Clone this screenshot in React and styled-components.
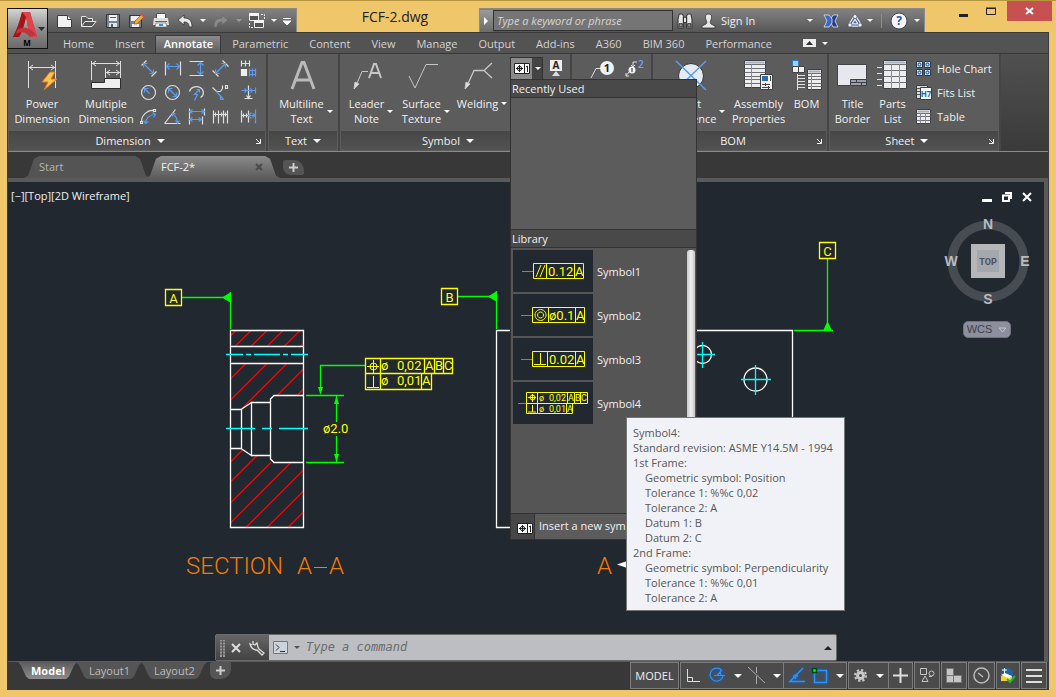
import React from 'react';
import styled, { createGlobalStyle, css } from 'styled-components';

const GlobalStyle = createGlobalStyle`
  * {
    box-sizing: border-box;
  }
  body {
    margin: 0;
    background: #efc669;
    color: #f0f0f0;
    font-family: 'Open Sans', 'Noto Sans', sans-serif;
    font-size: 11px;
    line-height: 15px;
  }
  button,
  input {
    margin: 0;
    padding: 0;
    border: none;
    background: none;
    color: inherit;
    font: inherit;
  }
  svg {
    display: block;
    flex: none;
  }
`;

const Window = styled.div`
  display: flex;
  flex-direction: column;
  min-height: 100vh;
  padding: 0 8px 7px 8px;
  border-top: 1px solid #b8953f;
  background: #efc669;
`;

/* ---------- title bar ---------- */

const TitleBar = styled.header`
  display: flex;
  align-items: flex-start;
  height: 31px;
  margin: 0 -1px;
`;

const AppButton = styled.button`
  position: relative;
  z-index: 2;
  width: 41px;
  height: 41px;
  margin-top: 7px;
  border: 1px solid #111;
  background: linear-gradient(#d4d4d4, #8a8a8a 55%, #6a6a6a);
  flex: none;
`;

const Bar = styled.div`
  display: flex;
  align-items: center;
  height: 24px;
  margin-top: 7px;
  border: 1px solid #8c8a84;
  border-bottom: none;
  background: linear-gradient(#828282, #565656);
`;

const QuickAccess = styled(Bar)`
  width: 249px;
  padding-left: 5px;
  border-left: none;
  flex: none;
`;

const IconButton = styled.button`
  display: flex;
  align-items: center;
  justify-content: center;
  width: ${p => p.$w || 24}px;
  height: ${p => p.$h || 22}px;
  flex: none;
`;

const FileName = styled.h1`
  flex: 1;
  margin: 0;
  padding: 6px 0 0 14px;
  color: #222;
  font-size: 14px;
  font-weight: 400;
  line-height: 20px;
  text-align: center;
`;

const InfoCenter = styled(Bar)`
  flex: none;
`;

const ExpandButton = styled(IconButton)`
  background: linear-gradient(#9a9a9a, #6b6b6b);
`;

const SearchInput = styled.input`
  width: 180px;
  height: 21px;
  padding-left: 3px;
  border: 1px solid #333;
  background: #757575;
  font-style: italic;
  &::placeholder {
    color: #d6d6d6;
    opacity: 1;
  }
`;

const SignIn = styled.button`
  display: flex;
  align-items: center;
  gap: 5px;
  width: 106px;
  height: 22px;
  padding-left: 4px;
`;

const Divider = styled.span`
  width: 1px;
  height: 14px;
  margin: 0 6px;
  background: #8d8d8d;
`;

const WindowControls = styled.div`
  display: flex;
  width: 124px;
  padding-left: 20px;
  color: #1d1d1d;
`;

const CloseButton = styled(IconButton)`
  width: 45px;
  height: 20px;
  margin-left: 7px;
  background: #c75050;
`;

const Caret = styled.span`
  width: 0;
  height: 0;
  border: ${p => p.$s || 3}px solid transparent;
  border-top-color: ${p => p.$c || '#fff'};
  border-bottom: none;
  flex: none;
`;

/* ---------- ribbon ---------- */

const Frame = styled.div`
  display: flex;
  flex: 1;
  flex-direction: column;
  border: 1px solid #3a3a3a;
  margin: 0 -1px;
  background: #383838;
`;

const RibbonTabs = styled.nav`
  display: flex;
  align-items: flex-end;
  height: 20px;
  padding-left: 44px;
  background: #535353;
`;

const RibbonTab = styled.button`
  height: 18px;
  padding: 0 9px 4px 10px;
  border: 1px solid transparent;
  border-bottom: none;
  border-radius: 1px 1px 0 0;
  color: #d2d2d2;
  ${p =>
    p.$active &&
    css`
      padding: 0 7px 4px 8px;
      border-color: #3a3a3a;
      background: linear-gradient(#8b8b8b, #5e5e5e);
      color: #fff;
      font-weight: 600;
    `}
`;

const RibbonToggle = styled.button`
  display: flex;
  align-items: center;
  gap: 5px;
  height: 18px;
  margin-left: 20px;
  padding-bottom: 2px;
`;

const Ribbon = styled.div`
  display: flex;
  height: 99px;
  border-top: 1px solid #383838;
  border-bottom: 1px solid #8a8a8a;
  background: linear-gradient(#505050, #3a3a3a);
`;

const Panel = styled.section`
  display: flex;
  flex-direction: column;
  border-right: 2px solid #454545;
  background: #5c5c5c;
  flex: none;
`;

const PanelBody = styled.div`
  display: flex;
  flex: 1;
  padding: 0 1px;
`;

const PanelTitle = styled.div`
  display: flex;
  align-items: center;
  height: 19px;
  margin: 0 1px 1px;
  background: linear-gradient(#474747, #525252);
`;

const PanelName = styled.button`
  display: flex;
  flex: 1;
  align-items: center;
  justify-content: center;
  gap: 6px;
`;

const BigButton = styled.button`
  display: flex;
  flex-direction: column;
  align-items: center;
  width: ${p => p.$w}px;
  padding-top: 6px;
`;

const BigLabel = styled.span`
  display: flex;
  align-items: center;
  gap: 3px;
  margin-top: 5px;
  padding-left: ${p => (p.$menu ? 6 : 0)}px;
  white-space: pre;
`;

const ToolGrid = styled.div`
  display: grid;
  grid-template-columns: repeat(4, 24px) 32px;
  grid-auto-rows: 24px;
  padding-top: 3px;
`;

const SmallTools = styled.div`
  display: flex;
  align-items: flex-start;
  padding: ${p => p.$pad || '3px 0 0'};
`;

const SplitButton = styled.div`
  position: relative;
  display: flex;
  height: 23px;
  border: 1px solid #333;
  background: linear-gradient(90deg, #8a8a8a 21px, #444 21px);
`;

const SheetList = styled.div`
  display: flex;
  flex-direction: column;
  padding: 3px 6px 0 5px;
`;

const ListButton = styled.button`
  display: flex;
  align-items: center;
  gap: 5px;
  height: 24px;
  padding-bottom: 1px;
`;

/* ---------- symbol menu ---------- */

const Menu = styled.div`
  position: absolute;
  z-index: 5;
  top: 21px;
  left: -1px;
  width: 187px;
  border: 1px solid #333;
  background: #5c5c5c;
`;

const MenuHeader = styled.h2`
  height: 18px;
  margin: 0;
  padding: 1px 1px;
  border-bottom: 1px solid #333;
  background: #494949;
  font-size: 11px;
  font-weight: 400;
`;

const RecentArea = styled.div`
  height: 132px;
  border-bottom: 1px solid #333;
`;

const Library = styled.div`
  display: flex;
  height: 265px;
  padding: 2px 1px 0 2px;
  background: #555;
`;

const SymbolList = styled.ul`
  display: flex;
  flex: 1;
  flex-direction: column;
  gap: 2px;
  margin: 0;
  padding: 0;
  list-style: none;
`;

const SymbolItem = styled.li`
  position: relative;
`;

const SymbolButton = styled.button`
  display: flex;
  align-items: center;
  gap: 4px;
  width: 100%;
  svg {
    background: #212830;
  }
`;

const ScrollThumb = styled.div`
  width: 8px;
  border-radius: 3px;
  background: linear-gradient(90deg, #c9c9c9, #efefef 50%, #c4c4c4);
`;

const InsertButton = styled.button`
  display: flex;
  width: 100%;
  height: 26px;
  border-top: 1px solid #333;
  line-height: 24px;
`;

const InsertIcon = styled.span`
  display: flex;
  align-items: center;
  justify-content: center;
  width: 24px;
  height: 25px;
  padding: 3px 0 0 4px;
  border-right: 1px solid #333;
  background: #474747;
`;

const InsertText = styled.span`
  padding-left: 4px;
`;

const Tooltip = styled.div`
  position: absolute;
  z-index: 6;
  top: 35px;
  left: 113px;
  min-width: 219px;
  padding: 7px 5px 5px 6px;
  border: 1px solid #767676;
  background: #f1f2f7;
  color: #575757;
  white-space: nowrap;
`;

const TipLine = styled.div`
  padding-left: ${p => (p.$indent ? 12 : 0)}px;
`;

/* ---------- file tabs ---------- */

const FileTabs = styled.nav`
  display: flex;
  align-items: flex-end;
  height: 26px;
  padding: 0 0 0 16px;
  background: #383838;
`;

const FileTab = styled.button`
  display: flex;
  align-items: center;
  justify-content: space-between;
  width: ${p => (p.$active ? 134 : 126)}px;
  height: 22px;
  padding: 0 17px 1px 15px;
  margin-left: ${p => (p.$active ? -4 : 0)}px;
  background: ${p =>
    p.$active ? 'linear-gradient(#8a8a8a, #5c5c5c)' : '#545454'};
  color: ${p => (p.$active ? '#f2f2f2' : '#b4b4b4')};
  clip-path: polygon(
    0 100%,
    4px 90%,
    10px 12%,
    15px 0,
    calc(100% - 15px) 0,
    calc(100% - 10px) 12%,
    calc(100% - 4px) 90%,
    100% 100%
  );
`;

const NewTab = styled.button`
  display: flex;
  align-items: center;
  justify-content: center;
  width: 21px;
  height: ${p => (p.$low ? 17 : 15)}px;
  margin: ${p => (p.$low ? '0 0 0 4px' : '0 0 3px 3px')};
  border-radius: ${p => (p.$low ? '3px 1px 10px 6px' : '2px 10px 2px 8px')};
  background: #555;
`;

/* ---------- drawing area ---------- */

const Canvas = styled.main`
  position: relative;
  display: flex;
  flex: 1;
  min-height: 480px;
  border: solid #5a5a5a;
  border-width: 4px 4px 0 0;
  background: #212830;
`;

const Drawing = styled.svg`
  flex: 1;
  min-width: 0;
  font-family: Roboto, sans-serif;
`;

const ViewLabel = styled.button`
  position: absolute;
  top: 6px;
  left: 3px;
`;

const ViewControls = styled.div`
  position: absolute;
  top: 7px;
  right: 7px;
  display: flex;
`;

const ViewCube = styled.div`
  position: absolute;
  top: 34px;
  right: 13px;
  display: flex;
  flex-direction: column;
  align-items: center;
  gap: 12px;
  font-family: 'Liberation Sans', Arial, sans-serif;
`;

const Wcs = styled.button`
  display: flex;
  align-items: center;
  gap: 6px;
  height: 17px;
  padding: 0 3px;
  border: 1px solid #70727e;
  border-radius: 5px;
  background: #8d8f9c;
  color: #3f424c;
`;

const CommandLine = styled.div`
  position: absolute;
  bottom: 0;
  left: 207px;
  display: flex;
  width: 60%;
  height: 27px;
  border: 1px solid #6a6a6a;
  border-radius: 2px;
  background: #bdbec1;
`;

const CommandTools = styled.div`
  display: flex;
  align-items: center;
  width: 53px;
  padding-left: 4px;
  background: linear-gradient(#666, #424242);
`;

const CommandInput = styled.input`
  flex: 1;
  min-width: 0;
  padding-left: 4px;
  font-family: 'DejaVu Sans Mono', monospace;
  font-size: 12px;
  font-style: italic;
  &::placeholder {
    color: #696b6e;
    opacity: 1;
  }
`;

/* ---------- bottom bar ---------- */

const BottomBar = styled.footer`
  display: flex;
  justify-content: space-between;
  height: 28px;
  padding-left: 10px;
  border-top: 1px solid #5a5a5a;
  background: #383838;
`;

const LayoutTabs = styled.nav`
  display: flex;
`;

const LayoutTab = styled.button`
  height: 17px;
  margin-right: -1px;
  padding: 0 12px 1px 13px;
  background: ${p =>
    p.$active ? 'linear-gradient(#5c5c5c, #8c8c8c)' : '#555'};
  color: ${p => (p.$active ? '#fff' : '#bcbcbc')};
  font-weight: ${p => (p.$active ? 700 : 400)};
  clip-path: polygon(
    0 0,
    100% 0,
    calc(100% - 3px) 20%,
    calc(100% - 8px) 85%,
    calc(100% - 11px) 100%,
    11px 100%,
    8px 85%,
    3px 20%
  );
`;

const StatusBar = styled.div`
  display: flex;
  gap: 1px;
  padding-right: 1px;
`;

const StatusGroup = styled.div`
  display: flex;
  align-items: center;
  height: 27px;
  border: 1px solid #7c7c7c;
  background: #4b4b4b;
`;

const StatusButton = styled.button`
  display: flex;
  align-items: center;
  justify-content: center;
  gap: ${p => p.$gap || 8}px;
  min-width: ${p => p.$w || 24}px;
  height: 25px;
  border-left: ${p => (p.$split ? '1px solid #7c7c7c' : 'none')};
  svg {
    ${p => p.$on && 'filter: drop-shadow(0 0 2px #0a66d8);'}
  }
`;

/* ---------- icons ---------- */

const G = '#dedede';
const B = '#5b9bf2';

// 16px dimension tools: grey strokes, then blue strokes
const dimTools = [
  { name: 'Aligned', g: 'M1 5L6 0M11 16L16 11', b: 'M3 3L13 13M3 7V3H7M13 9V13H9' },
  { name: 'Linear', g: 'M1 1V15M16 1V15', b: 'M2 6H15M5 3L2 6L5 9M12 3L15 6L12 9' },
  { name: 'Vertical', g: 'M1 1H15M1 15H15', b: 'M12 2V14M9 5L12 2L15 5M9 11L12 14L15 11' },
  { name: 'Rotated', g: 'M10 0L16 6M0 10L6 16', b: 'M3 13L13 3M9 3H13V7M3 9V13H7' },
  { name: 'Automatic', g: 'M1 0V6M5 0V6M9 0V6M1 3H9', b: 'M9 8V16M12 8V16M15 8V16M9 10H15M9 14H15', sq: true },
  { name: 'Radius', g: 'M15 8A7 7 0 1 1 1 8A7 7 0 1 1 15 8', b: 'M9 9L4 4M4 8V4H8' },
  { name: 'Diameter', g: 'M15 8A7 7 0 1 1 1 8A7 7 0 1 1 15 8', b: 'M4 4L12 12M4 8V4H8M12 8V12H8' },
  { name: 'Jogged', g: 'M1 7A7 6 0 1 1 12 13', b: 'M6 16L9 10L6 10L11 5M8 5H11V8' },
  { name: 'Chamfer', g: 'M0 3L4 7H8L10 4M10 1V4M13 1H15V4H13Z', b: 'M4 7L11 15M8 12V15H11' },
  { name: 'Symmetric', g: 'M8 1V14M4 14H12M6 11L8 14L10 11', b: 'M1 6H15M4 4L6 6L4 8M10 4L12 6L10 8M15 3V9' },
  { name: 'Arc length', g: 'M1 13C1 7 7 1 13 2M13 1H15V3H13ZM0 13H2V15H0Z', b: 'M5 15C5 10 9 6 15 6M12 4L15 6L13 9M3 12L5 15L8 13' },
  { name: 'Angular', g: 'M0 15H16M0 15L11 1', b: 'M8 5C11 7 13 11 13 15M8 8V5H11M11 12L13 15L15 12' },
  { name: 'Baseline', g: 'M1 0V16M14 8V16M16 0V7', b: 'M1 3H16M1 11H13M4 1L1 3L4 5M13 1L16 3L13 5M4 9L1 11L4 13M10 9L13 11L10 13' },
  { name: 'Chain', g: 'M1 2V15M6 2V15M11 2V15M15 2V15M1 6H15M3 4V8M9 4V8M13 4V8', b: '' },
  { name: 'Insert', g: 'M1 2V14M8 2V14M1 7H8M3 5V9M6 5V9', b: 'M15 1V15M8 7H15M11 4L8 7L11 10M12 5L15 7L12 9' }
];

function Stroke({ d, c = G, w = 16, h = 16, sw = 1, fill = 'none', children }) {
  return (
    <svg width={w} height={h} viewBox={`0 0 ${w} ${h}`} fill={fill} stroke={c} strokeWidth={sw}>
      <path d={d} />
      {children}
    </svg>
  );
}

function DimIcon({ tool }) {
  return (
    <svg width="18" height="18" viewBox="-.5 -.5 18 18" fill="none" strokeWidth="1.2">
      <path d={tool.g} stroke={G} />
      <path d={tool.b} stroke={B} />
      {tool.sq && <path d="M1 9H6V15H1Z" fill="#eee" stroke="#eee" />}
    </svg>
  );
}

const Logo = () => (
  <svg width="39" height="39" viewBox="0 0 39 39">
    <path d="M5 28C9 20 12 12 14 3H22L29 28H22L18 8C16 17 14 23 11 28Z" fill="#c8262c" />
    <path d="M14 3H22L29 28H22L18 8Z" fill="#e0434a" />
    <path d="M5 28C9 20 12 12 14 3L18 8C16 17 14 23 11 28Z" fill="#a3151b" />
    <path d="M9 21C15 17 22 18 28 26L22 28C18 23 13 22 8 25Z" fill="#c3343a" />
    <path d="M30 18H37L33.500 22Z" fill="#2c2c2c" />
    <text x="19" y="37" fill="#000" fontSize="8" fontWeight="700" textAnchor="middle">M</text>
  </svg>
);

const NewIcon = () => (
  <Stroke d="M1.500 2.500H11.500L15.500 6.500V14.500H1.500Z" c="#3c3c3c" w={17} fill="#f2f2f2">
    <path d="M11.500 2.500V6.500H15.500" />
  </Stroke>
);
const OpenIcon = () => (
  <Stroke d="M1.500 13V3.500H6L8 5.500H12.500V8M1.500 13.500L5 8.500H16L12 13.500Z" c="#e4e4e4" w={17} fill="#555" />
);
const SaveIcon = () => (
  <svg width="14" height="16" viewBox="0 0 14 16">
    <path d="M.5 1.500H13.500V14.500H.5Z" fill="#7a838c" stroke="#30363c" />
    <path d="M3 2H11V8H3Z" fill="#f2f2f2" />
    <path d="M3 10H11V14H3Z" fill="#dfe3e6" />
    <path d="M5 11H7V14H5ZM4 4H10V5H4Z" fill="#58616b" />
  </svg>
);
const SaveAsIcon = () => (
  <svg width="16" height="16" viewBox="0 0 16 16">
    <path d="M.5 2.500H12.500V14.500H.5Z" fill="#7a838c" stroke="#30363c" />
    <path d="M2 3H11V8H2ZM3 11H10V14H3Z" fill="#eee" />
    <path d="M5 11L6 8L13 1L15 4L8 11Z" fill="#f3a83b" stroke="#7d4c12" strokeWidth=".6" />
    <path d="M12 2L15 5L16 3L13 0Z" fill="#d54b39" />
  </svg>
);
const PrintIcon = () => (
  <svg width="16" height="16" viewBox="0 0 16 16">
    <path d="M3.500 .5H12.500V6H3.500Z" fill="#fff" stroke="#555" />
    <path d="M1 5H15L16 12H0Z" fill="#dedede" />
    <path d="M2 8H14V9H2Z" fill="#666" />
    <path d="M3 10H13L14 14H2Z" fill="#f7f7f7" stroke="#555" strokeWidth=".6" />
    <path d="M6 11H10V13H6Z" fill="#3c8ad8" />
  </svg>
);
const UndoIcon = ({ off }) => (
  <svg width="16" height="14" viewBox="0 0 16 14">
    <path
      transform={off ? 'matrix(-1 0 0 1 16 0)' : undefined}
      d="M1 6L7 1V4C12 4 15 6 15 13H12C12 9 10 8 7 8V11Z"
      fill={off ? '#8a8a8a' : '#e8e8e8'}
      stroke={off ? '#6a6a6a' : '#333'}
      strokeWidth=".8"
    />
  </svg>
);
const WorkspaceIcon = () => (
  <svg width="18" height="16" viewBox="0 0 18 16">
    <path d="M1.500 .5H10.500V7.500H1.500ZM6.500 7.500H15.500V14.500H6.500Z" fill="#555" stroke="#e8e8e8" />
    <path d="M1 0H11V3H1ZM6 7H16V10H6Z" fill="#f4f4f4" />
    <path d="M13 1.500H16.500V6M1.500 10V14.500H5" fill="none" stroke="#e8e8e8" strokeDasharray="2 1" />
  </svg>
);
const BinocularsIcon = () => (
  <svg width="16" height="16" viewBox="0 0 15 15" fill="#e6e6e6" stroke="#222" strokeWidth=".8">
    <path d="M2 1H5L6 3V14H1V6ZM10 1H13L14 6V14H9V3ZM6 4H9V9H6Z" />
    <path d="M2 10H5V13H2ZM10 10H13V13H10Z" fill="#8d9296" />
  </svg>
);
const UserIcon = () => (
  <svg width="15" height="16" viewBox="0 0 15 16" fill="#e8e8e8" stroke="#333" strokeWidth=".8">
    <path d="M7.500 1C11 1 11 4 10 7C9 9 9 10 10 11L14 13V15H1V13L5 11C6 10 6 9 5 7C4 4 4 1 7.500 1Z" />
  </svg>
);
const ExchangeIcon = () => (
  <svg width="16" height="14" viewBox="0 0 16 14" stroke="#dfe5f2" strokeWidth=".8">
    <path d="M15 1H10L7 7L10 13H15L12 7Z" fill="#2a3f8c" />
    <path d="M1 1H6L9 5V9L6 13H1L4 7Z" fill="#3e66c8" />
  </svg>
);
const A360Icon = () => (
  <svg width="16" height="16" viewBox="0 0 16 16" fill="none">
    <path d="M8 4L13 12H3Z" stroke="#e4e8f0" strokeWidth="3.500" strokeLinejoin="round" />
    <path d="M8 4L13 12H3Z" stroke="#4568b8" strokeWidth="1.200" />
    <g fill="#f2f4f8" stroke="#3d4a66" strokeWidth=".6">
      <circle cx="8" cy="3.500" r="2" />
      <circle cx="3" cy="12" r="2" />
      <circle cx="13" cy="12" r="2" />
    </g>
  </svg>
);
const HelpIcon = () => (
  <svg width="18" height="18" viewBox="0 0 18 18">
    <circle cx="9" cy="9" r="8" fill="#f4f6fa" stroke="#444" />
    <text x="9" y="13" fill="#1f58b8" fontSize="12" fontWeight="700" textAnchor="middle">?</text>
  </svg>
);

const PowerIcon = () => (
  <svg width="32" height="31" viewBox="0 0 32 31">
    <path d="M2.500 1V28M29.500 1V28M3 7.500H29M7 5L3.500 7.500L7 10M25 5L28.500 7.500L25 10" fill="none" stroke={G} />
    <path d="M24 12L16 22H22L18 30L31 19H25L29 12Z" fill="#ffc64d" stroke="#e0761a" />
  </svg>
);
const MultipleIcon = () => (
  <svg width="32" height="31" viewBox="0 0 32 31">
    <path d="M1.500 1V20M30.500 1V18M2 3.500H30M15.500 8V18M16 12.500H30M6 1L2.500 3.500L6 6M26 1L29.500 3.500L26 6M20 10L16.500 12.500L20 15M26 10L29.500 12.500L26 15" fill="none" stroke={G} />
    <path d="M1.500 22.500H14.500V18.500H30.500V28.500H1.500Z" fill="#eee" stroke="#2c2c2c" />
  </svg>
);
const BigAIcon = () => (
  <svg width="30" height="31" viewBox="0 0 30 31">
    <path d="M4 29L14 2.500H16L26 29M8 20H22" fill="none" stroke="#b9b9b9" strokeWidth="3" />
  </svg>
);
const LeaderIcon = () => (
  <svg width="30" height="31" viewBox="0 0 30 31" fill="none" stroke="#c6c6c6">
    <path d="M2 28L9 11.500H15" />
    <path d="M1 29L2 22L6 24Z" fill="#ddd" />
    <path d="M16 18L21 4H23L28 18M18 13H26" strokeWidth="2" />
  </svg>
);
const WeldIcon = () => (
  <svg width="30" height="31" viewBox="0 0 30 31" fill="none" stroke="#c6c6c6">
    <path d="M2 28L10 10.500H20L28 3M20 10.500L28 18" strokeWidth="1.300" />
    <path d="M1 29L2 22L6 24Z" fill="#ddd" />
  </svg>
);
const FcfIcon = () => (
  <svg width="16" height="11" viewBox="0 0 16 11">
    <path d="M.5 .5H15.500V10.500H.5Z" fill="#fff" stroke="#222" />
    <path d="M10.500 1V10M2 5.500H9M5.500 2V9M12 4L13.500 3V9" fill="none" stroke="#222" />
    <circle cx="5.500" cy="5.500" r="2.200" fill="none" stroke="#222" />
  </svg>
);
const DatumIcon = () => (
  <svg width="14" height="18" viewBox="0 0 14 18">
    <path d="M1 1H13V12H1Z" fill="#eee" />
    <text x="7" y="10" fill="#222" fontSize="10" fontWeight="700" textAnchor="middle">A</text>
    <path d="M7 12L11 17H3Z" fill="#ddd" />
  </svg>
);
const BalloonIcon = () => (
  <svg width="26" height="22" viewBox="0 0 26 22">
    <path d="M2 20L7 10.500H12" fill="none" stroke={G} />
    <circle cx="18" cy="10" r="7" fill="#f2f2f2" />
    <text x="18" y="14" fill="#222" fontSize="11" fontWeight="700" textAnchor="middle">1</text>
  </svg>
);
const RenumberIcon = () => (
  <svg width="20" height="20" viewBox="0 0 20 20">
    <circle cx="7" cy="11" r="3.500" fill="#f2f2f2" />
    <path d="M7 9V13" stroke="#222" />
    <path d="M4 13L1 17M1 14V17H4M8 8V3H12M6 6L8 8L10 6" fill="none" stroke={G} />
    <text x="13" y="9" fill="#6aa8ff" fontSize="10" fontWeight="600">2</text>
  </svg>
);
const PartRefIcon = () => (
  <svg width="34" height="31" viewBox="0 0 34 31">
    <circle cx="16" cy="16" r="12.500" fill="#e3ebf5" stroke="#333" />
    <path d="M1 1L31 30M31 1L1 30" stroke={B} strokeWidth="1.500" />
  </svg>
);

function Sheet({ x, y, w, h, rows, cols = [] }) {
  const lines = Array.from({ length: rows }, (_, i) => y + 4 + Math.round((i * (h - 4)) / rows));
  return (
    <g transform="translate(.5 .5)">
      <path d={`M${x} ${y}h${w}v${h}h${-w}Z`} fill="#ededed" stroke="#3c4146" />
      <path d={`M${x + 1} ${y + 2}h${w - 2}`} stroke="#aab1bb" strokeWidth="2" />
      {lines.map(l => (
        <path key={l} d={`M${x} ${l}h${w}`} stroke="#6c7076" />
      ))}
      {cols.map(c => (
        <path key={c} d={`M${c} ${y + 4}v${h - 4}`} stroke="#8a8e94" />
      ))}
    </g>
  );
}

const AssemblyIcon = () => (
  <svg width="31" height="31" viewBox="0 0 31 31">
    <Sheet x={1} y={0} w={21} h={27} rows={6} cols={[8]} />
    <path d="M17.500 14.500H29.500V29.500H17.500Z" fill="#f2f2f2" stroke="#3c4146" />
    <path d="M19 16H25V21H19Z" fill="#2d6bb0" />
    <path d="M19 24.500H27M19 27.500H27M22.500 23V26M25.500 26V29M27.500 16V21" stroke="#444" />
  </svg>
);
const BomIcon = () => (
  <svg width="31" height="31" viewBox="0 0 31 31">
    <path d="M1.500 .5H7.500V6.500H1.500Z" fill="#9ed0ff" stroke="#2f7cc9" />
    <path d="M1.500 6.500H7.500V12.500H1.500ZM7.500 6.500H13.500V12.500H7.500Z" fill="#eee" stroke="#444" />
    <path d="M6.500 14V30M6 15.500H14M6 18.500H14M6 21.500H14M6 24.500H14M6 27.500H14" stroke={G} />
    <Sheet x={16} y={9} w={14} h={20} rows={5} cols={[20]} />
  </svg>
);
const TitleBorderIcon = () => (
  <svg width="31" height="31" viewBox="0 0 31 31">
    <path d="M.5 4.500H29.500V25.500H.5Z" fill="#e6e8ed" stroke="#444" />
    <path d="M13.500 19.500H29.500V25.500H13.500ZM14 22.500H29M19.500 20V22M24.500 23V25" fill="#9aa0aa" stroke="#3c4146" />
  </svg>
);
const PartsListIcon = () => (
  <svg width="31" height="31" viewBox="0 0 31 31">
    <path d="M0 7.500H5M0 13.500H5M0 19.500H5M0 25.500H5" stroke={G} />
    <Sheet x={6} y={0} w={23} h={28} rows={4} cols={[14, 22]} />
  </svg>
);
const HoleIcon = () => (
  <svg width="17" height="17" viewBox="0 0 17 17" fill="#eef4fb" stroke="#2d3a48">
    <path d="M1.500 1.500H7.500V7.500H1.500ZM9.500 1.500H15.500V7.500H9.500ZM1.500 9.500H7.500V15.500H1.500ZM9.500 9.500H15.500V15.500H9.500Z" />
    <g fill="none" stroke="#2b74c4" strokeWidth="1.300">
      <circle cx="4.500" cy="4.500" r="1.500" />
      <circle cx="12.500" cy="4.500" r="1.500" />
      <circle cx="4.500" cy="12.500" r="1.500" />
      <circle cx="12.500" cy="12.500" r="1.500" />
    </g>
  </svg>
);
const FitsIcon = () => (
  <svg width="17" height="17" viewBox="0 0 17 17">
    <path d="M1.500 1.500H12.500V14.500H1.500Z" fill="#d8d8d8" stroke="#3c4146" />
    <path d="M2 4.500H5M2 7.500H5M2 10.500H5" stroke="#555" />
    <path d="M5.500 3.500H16.500V15.500H5.500Z" fill="#f4f8fd" stroke="#3c4146" />
    <text x="11" y="13" fill="#1d66ba" fontSize="8" fontWeight="700" textAnchor="middle">H7</text>
  </svg>
);
const TableIcon = () => (
  <svg width="17" height="17" viewBox="0 0 17 17">
    <Sheet x={1} y={1} w={14} h={14} rows={3} cols={[5, 10]} />
  </svg>
);

const Launcher = () => (
  <IconButton $w={14} $h={18} aria-label="Panel options">
    <Stroke d="M1 1L5 5M5.500 1V5.500H1" w={6} h={6} c="#eee" />
  </IconButton>
);

/* ---------- drawing content ---------- */

const hatch = [
  'M230.500 336L236 330.500M235 346.500L251 330.500M251 346.500L267 330.500M267 346.500L283 330.500M284 346.500L300 330.500M300 346.500L303.500 343',
  'M230.500 379L246 363.500M230.500 400L267 363.500M241 409.500L287 363.500M277 395.500L303.500 369M297 395.500L303.500 389',
  'M230.500 462L243 449.500M230.500 482L257 455.500M230.500 503L271 462.500M230.500 523L291 462.500M246 527.500L303.500 470M267 527.500L303.500 491M288 527.500L303.500 512'
];

function DatumBox({ x, y, label }) {
  return (
    <g>
      <path d={`M${x} ${y}h16v16h-16Z`} fill="none" stroke="#ff0" strokeWidth="1.300" />
      <text x={x + 8} y={y + 13} fill="#ff0" fontSize="13" textAnchor="middle">{label}</text>
    </g>
  );
}

function Part() {
  return (
    <Drawing role="img" aria-label="FCF-2 drawing">
      <g transform="translate(-8 -182)" fill="none" strokeWidth="1">
        <path d={hatch.join('')} stroke="#f00" strokeWidth="1.300" />
        <g stroke="#fff" strokeWidth="1.300">
          <path d="M230.500 330.500H303.500V527.500H230.500ZM230 346.500H304M230 363.500H304" />
          <path d="M230 409.500H241.500V448.500H230M241 409.500L251.500 402.500V455.500L241 448.500M251 402.500H270.500M251 455.500H270.500" />
          <path d="M304 395.500H274L270.500 399V459L274 462.500H304" />
          <path d="M792.500 527.500H496.500V330.500H792.500Z" />
          <circle cx="755.500" cy="379.500" r="11.500" />
          <circle cx="702.500" cy="354.500" r="9" />
        </g>
        <g stroke="#0ff" strokeWidth="1.300">
          <path d="M226 354.500H243M246 354.500H251M254 354.500H280M283 354.500H288M291 354.500H308" />
          <path d="M226 428.500H255M262 428.500H272M279 428.500H308" />
          <path d="M741 379.500H771M755.500 365V395M689 354.500H715M702.500 342V368" />
        </g>
        <g stroke="#0f0" strokeWidth="1.300">
          <path d="M182 297.500H224M230.500 292V329M458 296.500H490M496.500 291V329M827.500 259V324M794 330.500H833" />
          <path d="M365 365.500H320.500V390M306 395.500H344M306 462.500H344M336.500 396V422M336.500 436V462" />
        </g>
        <path
          d="M222 297.500L231 292V303ZM488 296.500L497 291V302ZM827.500 321L832 331H823ZM320.500 395L318 387H323ZM336.500 396L334 404H339ZM336.500 462L334 454H339Z"
          fill="#0f0"
        />
        <g stroke="#ff0">
          <path d="M365.500 358.500H452.500V373.500H365.500ZM380.500 358V389M424.500 358V374M434.500 358V374M443.500 358V374M365.500 373.500V389.500H431.500V373.500M421.500 374V389" strokeWidth="1.300" />
          <path d="M367 366.500H379M373.500 360V373M373.500 376V387M367 387.500H379" />
          <circle cx="373.500" cy="366.500" r="3.500" />
        </g>
        <g fill="#ff0" fontSize="13">
          <text x="381" y="370">ø</text>
          <text x="397" y="370">0,02</text>
          <text x="425" y="370">A</text>
          <text x="435" y="370">B</text>
          <text x="444" y="370">C</text>
          <text x="381" y="385">ø</text>
          <text x="397" y="385">0,01</text>
          <text x="422" y="385">A</text>
          <text x="323" y="433">ø2.0</text>
        </g>
        <DatumBox x={165.5} y={289.5} label="A" />
        <DatumBox x={441.5} y={288.5} label="B" />
        <DatumBox x={819.5} y={242.5} label="C" />
        <g fill="#f57c00" fontSize="24" fontWeight="300">
          <text x="186" y="574">SECTION</text>
          <text x="297" y="574">A</text>
          <text x="329" y="574">A</text>
          <text x="597" y="574">A</text>
        </g>
        <path d="M314 567.500H327" stroke="#f57c00" />
        <path d="M617 564.500L630 560V569Z" fill="#fff" />
      </g>
    </Drawing>
  );
}

/* ---------- library symbols ---------- */

const symbols = [
  {
    name: 'Symbol1',
    lead: 'M9 21.500H20',
    box: 'M20.500 13.500H70.500V28.500H20.500ZM33.500 13V29M61.500 13V29M23 27L28 15M27 27L32 15',
    texts: [[35, 26, '0.12'], [62, 26, 'A']]
  },
  {
    name: 'Symbol2',
    lead: 'M8 21.500H19',
    box: 'M19.500 13.500H71.500V28.500H19.500ZM35.500 13V29M62.500 13V29M27.500 15.500a5.500 5.500 0 1 0 .1 0M27.500 18a3 3 0 1 0 .1 0',
    texts: [[36, 26, 'ø0.1'], [63, 26, 'A']]
  },
  {
    name: 'Symbol3',
    lead: 'M8 21.500H19',
    box: 'M19.500 13.500H71.500V28.500H19.500ZM34.500 13V29M62.500 13V29M27.500 15V26.500M21 26.500H33',
    texts: [[36, 26, '0.02'], [63, 26, 'A']]
  },
  {
    name: 'Symbol4',
    lead: 'M5 21.500H14',
    small: true,
    box: 'M13.500 10.500H74.500V21.500H13.500ZM24.500 10V31M54.500 10V22M61.500 10V22M67.500 10V22M13.500 21.500V31.500H59.500V21.500M53.500 21V32M15 15.500H23M19.500 12V20M17 15.500a2.500 2.500 0 1 0 5 0a2.500 2.500 0 1 0 -5 0M19.500 23V30M15 30H23',
    texts: [
      [26, 19, 'ø'], [36, 19, '0,02'], [55, 19, 'A'], [62, 19, 'B'], [68, 19, 'C'],
      [26, 30, 'ø'], [36, 30, '0,01'], [54, 30, 'A']
    ]
  }
];

const tipLines = [
  [0, 'Symbol4:'],
  [0, 'Standard revision: ASME Y14.5M - 1994'],
  [0, '1st Frame:'],
  [1, 'Geometric symbol: Position'],
  [1, 'Tolerance 1: %%c 0,02'],
  [1, 'Tolerance 2: A'],
  [1, 'Datum 1: B'],
  [1, 'Datum 2: C'],
  [0, '2nd Frame:'],
  [1, 'Geometric symbol: Perpendicularity'],
  [1, 'Tolerance 1: %%c 0,01'],
  [1, 'Tolerance 2: A']
];

function SymbolMenu() {
  return (
    <Menu>
      <MenuHeader>Recently Used</MenuHeader>
      <RecentArea />
      <MenuHeader>Library</MenuHeader>
      <Library>
        <SymbolList>
          {symbols.map(s => (
            <SymbolItem key={s.name}>
              <SymbolButton>
                <svg width="80" height="42" fill="none" fontFamily="Roboto, sans-serif">
                  <path d={s.lead} stroke="#0d0" />
                  <path d={s.box} stroke="#ff0" />
                  <g fill="#ff0" fontSize={s.small ? 9 : 13}>
                    {s.texts.map(([x, y, t]) => (
                      <text key={`${x}-${y}`} x={x} y={y}>{t}</text>
                    ))}
                  </g>
                </svg>
                {s.name}
              </SymbolButton>
              {s.name === 'Symbol4' && (
                <Tooltip role="tooltip">
                  {tipLines.map(([indent, text], i) => (
                    <TipLine key={i} $indent={indent}>{text}</TipLine>
                  ))}
                </Tooltip>
              )}
            </SymbolItem>
          ))}
        </SymbolList>
        <ScrollThumb />
      </Library>
      <InsertButton>
        <InsertIcon>
          <FcfIcon />
        </InsertIcon>
        <InsertText>Insert a new symbol</InsertText>
      </InsertButton>
    </Menu>
  );
}

function Big({ w, icon, label, menu }) {
  return (
    <BigButton $w={w}>
      {icon}
      <BigLabel $menu={menu}>
        {label}
        {menu && <Caret />}
      </BigLabel>
    </BigButton>
  );
}

function RibbonPanel({ title, menu, launcher, children }) {
  return (
    <Panel>
      <PanelBody>{children}</PanelBody>
      <PanelTitle>
        <PanelName>
          {title}
          {menu && <Caret $s={4} />}
        </PanelName>
        {launcher && <Launcher />}
      </PanelTitle>
    </Panel>
  );
}

const ribbonTabs = [
  'Home', 'Insert', 'Annotate', 'Parametric', 'Content', 'View',
  'Manage', 'Output', 'Add-ins', 'A360', 'BIM 360', 'Performance'
];

function Header() {
  return (
    <TitleBar>
      <AppButton aria-label="Application menu">
        <Logo />
      </AppButton>
      <QuickAccess>
        <IconButton $w={23} aria-label="New"><NewIcon /></IconButton>
        <IconButton $w={25} aria-label="Open"><OpenIcon /></IconButton>
        <IconButton aria-label="Save"><SaveIcon /></IconButton>
        <IconButton aria-label="Save as"><SaveAsIcon /></IconButton>
        <IconButton aria-label="Plot"><PrintIcon /></IconButton>
        <IconButton aria-label="Undo"><UndoIcon /></IconButton>
        <IconButton $w={12} aria-label="Undo list"><Caret /></IconButton>
        <IconButton aria-label="Redo"><UndoIcon off /></IconButton>
        <IconButton $w={12} aria-label="Redo list"><Caret $c="#999" /></IconButton>
        <IconButton aria-label="Workspace"><WorkspaceIcon /></IconButton>
        <IconButton $w={10} aria-label="Workspace list"><Caret /></IconButton>
        <IconButton $w={16} aria-label="Customize">
          <Stroke d="M0 1.500H8M0 4L4 8L8 4Z" w={8} h={8} c="#fff" fill="#fff" />
        </IconButton>
      </QuickAccess>
      <FileName>FCF-2.dwg</FileName>
      <InfoCenter>
        <ExpandButton $w={13} aria-label="Collapse search">
          <Stroke d="M0 0L4 4L0 8Z" w={5} h={8} c="none" fill="#fff" />
        </ExpandButton>
        <SearchInput aria-label="Search" placeholder="Type a keyword or phrase" />
        <IconButton aria-label="Find"><BinocularsIcon /></IconButton>
        <SignIn>
          <UserIcon />
          Sign In
        </SignIn>
        <IconButton $w={14} aria-label="Account"><Caret /></IconButton>
        <IconButton $w={28} aria-label="Exchange"><ExchangeIcon /></IconButton>
        <IconButton $w={20} aria-label="A360"><A360Icon /></IconButton>
        <IconButton $w={10} aria-label="A360 list"><Caret /></IconButton>
        <Divider />
        <IconButton $w={22} aria-label="Help"><HelpIcon /></IconButton>
        <IconButton $w={14} aria-label="Help list"><Caret /></IconButton>
      </InfoCenter>
      <WindowControls>
        <IconButton $w={37} aria-label="Minimize">
          <Stroke d="M0 9.500H9" w={9} h={12} c="#222" sw={3} />
        </IconButton>
        <IconButton $w={18} $h={20} aria-label="Maximize">
          <Stroke d="M.5 1.500H9.500V7.500H.5ZM0 1H10" w={10} h={8} c="#222" sw={1} />
        </IconButton>
        <CloseButton aria-label="Close">
          <Stroke d="M1 1L8 7M8 1L1 7" w={9} h={8} c="#fff" sw={2} />
        </CloseButton>
      </WindowControls>
    </TitleBar>
  );
}

function MainRibbon() {
  return (
    <>
      <RibbonTabs>
        {ribbonTabs.map(t => (
          <RibbonTab key={t} $active={t === 'Annotate'}>{t}</RibbonTab>
        ))}
        <RibbonToggle aria-label="Minimize ribbon">
          <svg width="15" height="8" viewBox="0 0 15 8">
            <path d="M1 0H14V8H1Z" fill="#eee" />
            <path d="M4 6L7.500 2L11 6Z" fill="#333" />
          </svg>
          <Caret />
        </RibbonToggle>
      </RibbonTabs>
      <Ribbon>
        <RibbonPanel title="Dimension" menu launcher>
          <Big w={66} icon={<PowerIcon />} label={'Power\nDimension'} />
          <Big w={62} icon={<MultipleIcon />} label={'Multiple\nDimension'} />
          <ToolGrid>
            {dimTools.map((t, i) => (
              <IconButton key={t.name} $w={i % 5 === 4 ? 32 : 24} $h={24} aria-label={t.name}>
                <DimIcon tool={t} />
              </IconButton>
            ))}
          </ToolGrid>
        </RibbonPanel>
        <RibbonPanel title="Text" menu>
          <Big w={68} icon={<BigAIcon />} label={'Multiline\nText'} menu />
        </RibbonPanel>
        <RibbonPanel title="Symbol" menu launcher>
          <Big w={54} icon={<LeaderIcon />} label={'Leader\nNote'} menu />
          <Big
            w={56}
            icon={<Stroke d="M1 16L7 28L18 4.500H30" w={30} h={31} c="#c6c6c6" />}
            label={'Surface\nTexture'}
            menu
          />
          <Big w={56} icon={<WeldIcon />} label="Welding" menu />
          <SmallTools $pad="3px 0 0 3px">
            <SplitButton>
              <IconButton $w={22} $h={21} aria-label="Feature control frame">
                <FcfIcon />
              </IconButton>
              <IconButton $w={9} $h={21} aria-label="Symbol list"><Caret /></IconButton>
              <SymbolMenu />
            </SplitButton>
            <IconButton $w={26} aria-label="Datum"><DatumIcon /></IconButton>
          </SmallTools>
        </RibbonPanel>
        <RibbonPanel title="Balloon">
          <SmallTools $pad="4px 0 0 12px">
            <IconButton $w={34} aria-label="Balloon"><BalloonIcon /></IconButton>
            <IconButton $w={31} aria-label="Renumber"><RenumberIcon /></IconButton>
          </SmallTools>
        </RibbonPanel>
        <RibbonPanel title="BOM" launcher>
          <Big w={76} icon={<PartRefIcon />} label={'Part\nReference'} menu />
          <Big w={57} icon={<AssemblyIcon />} label={'Assembly\nProperties'} />
          <Big w={39} icon={<BomIcon />} label="BOM" />
        </RibbonPanel>
        <RibbonPanel title="Sheet" menu launcher>
          <Big w={45} icon={<TitleBorderIcon />} label={'Title\nBorder'} />
          <Big w={35} icon={<PartsListIcon />} label={'Parts\nList'} />
          <SheetList>
            <ListButton><HoleIcon />Hole Chart</ListButton>
            <ListButton><FitsIcon />Fits List</ListButton>
            <ListButton><TableIcon />Table</ListButton>
          </SheetList>
        </RibbonPanel>
      </Ribbon>
    </>
  );
}

function Status() {
  const blue = '#2b93ff';
  return (
    <StatusBar>
      <StatusGroup>
        <StatusButton $w={47}>MODEL</StatusButton>
      </StatusGroup>
      <StatusGroup>
        <StatusButton aria-label="Ortho">
          <Stroke d="M1.500 1V13.500H14M2 9.500H6.500V13" w={15} h={15} />
        </StatusButton>
        <StatusButton $w={40} $on aria-label="Polar tracking">
          <Stroke d="M13 4A6.500 6.500 0 1 0 14 9M5 8.500H16M8 8.500L13 3M11 5L12 8" w={17} h={17} c={blue} sw={1.2} />
          <Caret $s={4} />
        </StatusButton>
        <StatusButton $w={38} aria-label="Isometric">
          <Stroke d="M0 0L17 16M8.500 0V6M8.500 9V17" w={17} h={17} c="#aaa" />
          <Caret $s={4} />
        </StatusButton>
        <StatusButton $w={25} $on $split aria-label="Snap tracking">
          <Stroke d="M15 1L2 14.500H17M5 9H10M7.500 7V12" w={17} h={17} c={blue} sw={1.5} />
        </StatusButton>
        <StatusButton $w={38} $on aria-label="Object snap">
          <Stroke d="M3.500 3.500H15.500V15.500H3.500Z" w={17} h={17} c={blue} sw={1.5}>
            <path d="M1.500 1.500H5.500V5.500H1.500Z" fill="#0f0" stroke="#041" />
          </Stroke>
          <Caret $s={4} />
        </StatusButton>
      </StatusGroup>
      <StatusGroup>
        <StatusButton $w={39} aria-label="Workspace switching">
          <svg width="15" height="15" viewBox="0 0 15 15">
            <circle cx="7.500" cy="7.500" r="4.500" fill="#c8c8c8" />
            <circle cx="7.500" cy="7.500" r="5.500" fill="none" stroke="#c8c8c8" strokeWidth="2" strokeDasharray="2.300 2" />
            <circle cx="7.500" cy="7.500" r="1.500" fill="#4b4b4b" />
          </svg>
          <Caret $s={4} />
        </StatusButton>
        <StatusButton $split aria-label="Annotation monitor">
          <Stroke d="M7.500 0V15M0 7.500H15" w={15} h={15} sw={2} />
        </StatusButton>
      </StatusGroup>
      <StatusGroup>
        <StatusButton aria-label="Units">
          <Stroke d="M1.500 1.500H7.500V7.500H1.500ZM10 9.500H13M6 9L9 14.500H3Z" w={16} h={17} c="#c4c4c4">
            <circle cx="12.500" cy="6.500" r="2.500" />
          </Stroke>
        </StatusButton>
      </StatusGroup>
      <StatusGroup>
        <StatusButton aria-label="Quick properties">
          <svg width="16" height="15" viewBox="0 0 16 15" fill="#c4c4c4" stroke="#777">
            <path d="M.5 .5H7.500V7.500H.5ZM.5 7.500H7.500V14.500H.5ZM7.500 7.500H15.500V14.500H7.500Z" />
          </svg>
        </StatusButton>
      </StatusGroup>
      <StatusGroup>
        <StatusButton $w={25} aria-label="Hardware acceleration">
          <Stroke d="M5 6L10 10" w={17} h={17} c="#bbb" sw={1.5}>
            <circle cx="8.500" cy="8.500" r="7.500" />
          </Stroke>
        </StatusButton>
      </StatusGroup>
      <StatusGroup>
        <StatusButton $w={22} aria-label="Trusted file">
          <svg width="16" height="17" viewBox="0 0 16 17">
            <path d="M1 1H9L13 4V14H1Z" fill="#23639d" />
            <path d="M1 9H12V14H1Z" fill="#f2d33a" />
            <path d="M1 8L5 6L12 9L9 11Z" fill="#fff" />
            <path d="M2 3H7M4.500 1V7" stroke="#fff" />
            <path d="M7 12L10 15L15 9" fill="none" stroke="#25b52b" strokeWidth="2" />
          </svg>
        </StatusButton>
      </StatusGroup>
      <StatusGroup>
        <StatusButton aria-label="Customization">
          <Stroke d="M0 2H16M0 8H16M0 14H16" w={16} h={15} sw={2} />
        </StatusButton>
      </StatusGroup>
    </StatusBar>
  );
}

const Plus = () => <Stroke d="M4.500 0V9M0 4.500H9" w={9} h={9} sw={2} c="#ccc" />;

function Compass() {
  return (
    <ViewCube>
      <svg width="88" height="93" viewBox="0 0 88 93">
        <circle cx="45" cy="45" r="36" fill="none" stroke="#474b52" strokeWidth="9" />
        <path d="M28 28H62V62H28Z" fill="#b4b6b8" />
        <path d="M34 34H56V56H34Z" fill="#a3a8ae" />
        <g fill="#b9bbbd" fontSize="14" fontWeight="700" textAnchor="middle">
          <text x="45" y="13">N</text>
          <text x="45" y="88">S</text>
          <text x="8" y="50">W</text>
          <text x="82" y="50">E</text>
        </g>
        <text
          x="45"
          y="49"
          fill="#4c5158"
          fontFamily="Roboto, sans-serif"
          fontSize="9"
          fontWeight="700"
          textAnchor="middle"
        >
          TOP
        </text>
      </svg>
      <Wcs>
        WCS
        <Stroke d="M1 1H8L4.500 5Z" w={9} h={6} c="#c4c5cc" />
      </Wcs>
    </ViewCube>
  );
}

export default function App() {
  return (
    <>
      <GlobalStyle />
      <Window>
        <Header />
        <Frame>
          <MainRibbon />
          <FileTabs>
            <FileTab>Start</FileTab>
            <FileTab $active>
              FCF-2*
              <Stroke d="M1 1L7 7M7 1L1 7" w={8} h={8} c="#4a4a4a" sw={2} />
            </FileTab>
            <NewTab aria-label="New drawing"><Plus /></NewTab>
          </FileTabs>
          <Canvas>
            <Part />
            <ViewLabel>[−][Top][2D Wireframe]</ViewLabel>
            <ViewControls>
              <IconButton $w={20} $h={16} aria-label="Minimize view">
                <Stroke d="M0 8.500H10" w={10} h={10} c="#fff" sw={3} />
              </IconButton>
              <IconButton $w={20} $h={16} aria-label="Restore view">
                <Stroke d="M1 3.500H7V9H1ZM3 1H9V7" w={10} h={10} c="#fff" sw={2} />
              </IconButton>
              <IconButton $w={20} $h={16} aria-label="Close view">
                <Stroke d="M1 1L9 9M9 1L1 9" w={10} h={10} c="#fff" sw={2} />
              </IconButton>
            </ViewControls>
            <Compass />
            <CommandLine>
              <CommandTools>
                <Stroke d="M1 1V18M4 1V18" w={6} h={18} c="#999" sw={2}>
                  <path d="M0 3H6M0 6H6M0 9H6M0 12H6M0 15H6" stroke="#555" strokeWidth="1" />
                </Stroke>
                <IconButton $w={20} aria-label="Close command line">
                  <Stroke d="M1 1L9 9M9 1L1 9" w={10} h={10} c="#ddd" sw={2} />
                </IconButton>
                <IconButton $w={22} aria-label="Customize command line">
                  <svg width="16" height="16" viewBox="0 0 16 16">
                    <path
                      d="M4 1L4 4L6 5L8 3C9 6 8 6 10 9L15 13L13 15L8 10C5 10 2 8 1 4L3 5"
                      fill="none"
                      stroke="#ddd"
                      strokeWidth="1.300"
                    />
                  </svg>
                </IconButton>
              </CommandTools>
              <IconButton $w={23} $h={25} aria-label="Prompt">
                <Stroke d="M.5 .5H14.500V12.500H.5Z" w={15} h={13} c="#6f7a88" fill="#cdd3dc">
                  <path d="M3 3.500L6 6.500L3 9.500M7 10.500H12" stroke="#333" fill="none" />
                </Stroke>
              </IconButton>
              <IconButton $w={10} $h={25} aria-label="Recent commands"><Caret $c="#555" /></IconButton>
              <CommandInput aria-label="Command" placeholder="Type a command" />
              <IconButton $w={16} $h={25} aria-label="Command history">
                <Stroke d="M0 4L4 0L8 4Z" w={8} h={4} c="none" fill="#222" />
              </IconButton>
            </CommandLine>
          </Canvas>
          <BottomBar>
            <LayoutTabs>
              <LayoutTab $active>Model</LayoutTab>
              <LayoutTab>Layout1</LayoutTab>
              <LayoutTab>Layout2</LayoutTab>
              <NewTab $low aria-label="New layout"><Plus /></NewTab>
            </LayoutTabs>
            <Status />
          </BottomBar>
        </Frame>
      </Window>
    </>
  );
}
